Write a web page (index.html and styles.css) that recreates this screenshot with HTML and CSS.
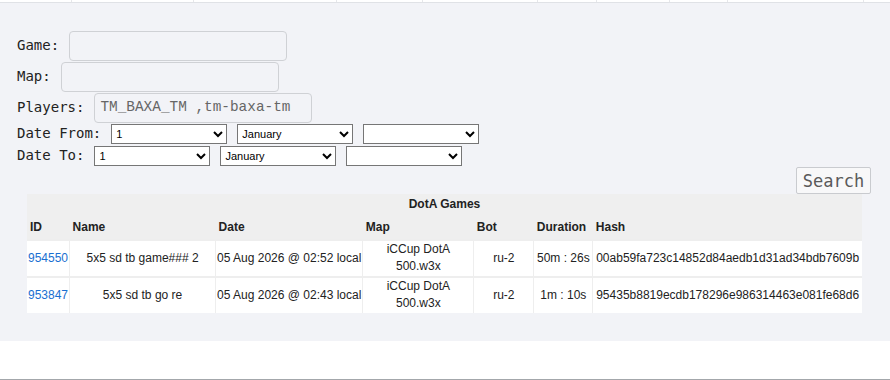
FILE: index.html
```html
<!DOCTYPE html>
<html lang="en">
<head>
    <meta charset="UTF-8">
    <meta name="viewport" content="width=device-width, initial-scale=1.0">
    <title>DotA Games</title>
    <link rel="stylesheet" href="styles.css">
</head>
<body>
    <div class="topnav">
        <div style="width:71px"></div>
        <div style="width:121px"></div>
        <div style="width:142px"></div>
        <div style="width:85px"></div>
        <div style="width:114px"></div>
        <div style="width:58px"></div>
        <div style="width:72px"></div>
        <div style="width:57px"></div>
        <div style="width:135px"></div>
    </div>
    <main>
        <form class="search">
            <div class="row">
                <label>Game:</label>
                <input type="text" class="field">
            </div>
            <div class="row">
                <label>Map:</label>
                <input type="text" class="field">
            </div>
            <div class="row">
                <label>Players:</label>
                <input type="text" class="field" value="TM_BAXA_TM ,tm-baxa-tm">
            </div>
            <div class="row date">
                <label>Date From:</label>
                <select><option>1</option></select>
                <select><option>January</option></select>
                <select><option></option></select>
            </div>
            <div class="row date">
                <label>Date To:</label>
                <select><option>1</option></select>
                <select><option>January</option></select>
                <select><option></option></select>
            </div>
            <div class="actions">
                <button type="button">Search</button>
            </div>
        </form>

        <table class="games">
            <tr class="caption">
                <th colspan="7">DotA Games</th>
            </tr>
            <tr class="head">
                <th class="c-id">ID</th>
                <th class="c-name">Name</th>
                <th class="c-date">Date</th>
                <th class="c-map">Map</th>
                <th class="c-bot">Bot</th>
                <th class="c-dur">Duration</th>
                <th class="c-hash">Hash</th>
            </tr>
            <tr>
                <td class="id"><a href="#">954550</a></td>
                <td>5x5 sd tb game### 2</td>
                <td>05 Aug 2026 @ 02:52 local</td>
                <td>iCCup DotA<br>500.w3x</td>
                <td>ru-2</td>
                <td>50m : 26s</td>
                <td>00ab59fa723c14852d84aedb1d31ad34bdb7609b</td>
            </tr>
            <tr>
                <td class="id"><a href="#">953847</a></td>
                <td>5x5 sd tb go re</td>
                <td>05 Aug 2026 @ 02:43 local</td>
                <td>iCCup DotA<br>500.w3x</td>
                <td>ru-2</td>
                <td>1m : 10s</td>
                <td>95435b8819ecdb178296e986314463e081fe68d6</td>
            </tr>
        </table>
    </main>
    <div class="footer"></div>
</body>
</html>
```

FILE: styles.css
```css
body {
    margin: 0;
    font-family: "Liberation Sans", Arial, sans-serif;
    color: #222;
}
.topnav {
    display: flex;
    height: 2px;
    background-color: #fff;
    border-bottom: 1px solid #e0e2e6;
}
.topnav div {
    border-right: 1px solid #e6e7ea;
}
main {
    background-color: #f2f3f7;
    padding: 27px 0 28px 0;
}
.search {
    padding-left: 17px;
    font-family: "DejaVu Sans Mono", monospace;
    font-size: 14px;
}
.row {
    display: flex;
    align-items: center;
    gap: 10px;
    height: 31px;
}
.row label {
    margin-top: -2px;
}
.row.date {
    height: 22px;
}
.field {
    box-sizing: border-box;
    width: 218px;
    height: 30px;
    margin: 0;
    padding: 0 5px 2px;
    border: 1px solid #cfd1d5;
    border-radius: 4px;
    background: transparent;
    font-family: "Liberation Mono", "DejaVu Sans Mono", monospace;
    font-size: 14.4px;
    color: #666;
}
select {
    box-sizing: border-box;
    width: 116px;
    height: 20px;
    margin: 0;
    font-family: "Liberation Sans", Arial, sans-serif;
    font-size: 11px;
    color: #000;
    background-color: #fff;
}
.actions {
    display: flex;
    justify-content: flex-end;
    padding-right: 19px;
}
.actions button {
    width: 75px;
    height: 27px;
    padding: 0;
    border: 1px solid #c9cbcf;
    border-radius: 2px;
    background-color: #f8f8f9;
    font-family: "DejaVu Sans Mono", monospace;
    font-size: 17px;
    color: #5a5a5a;
}
.games {
    width: 835px;
    margin-left: 27px;
    border-collapse: collapse;
    background-color: #efefef;
    font-size: 12px;
}
.games th {
    text-align: left;
    padding: 0 3px;
    font-weight: bold;
    color: #222;
}
.games .caption th {
    text-align: center;
    height: 20px;
}
.games .head th {
    height: 25px;
}
.games td {
    background-color: #fff;
    text-align: center;
    white-space: nowrap;
    line-height: 17px;
    padding: 0 1px 1px;
    border-top: 2px solid #eeeeee;
    border-left: 1px solid #eeeeee;
}
.games td:first-child {
    border-left: none;
}
.games td.id {
    text-align: left;
}
.games a {
    color: #1a6fd1;
    text-decoration: none;
}
.c-id { width: 35px; }
.c-name { width: 140px; }
.c-date { width: 140px; }
.c-map { width: 105px; }
.c-bot { width: 54px; }
.c-dur { width: 53px; }
.footer {
    margin-top: 38px;
    border-top: 1px solid #a3a7ab;
}
```
